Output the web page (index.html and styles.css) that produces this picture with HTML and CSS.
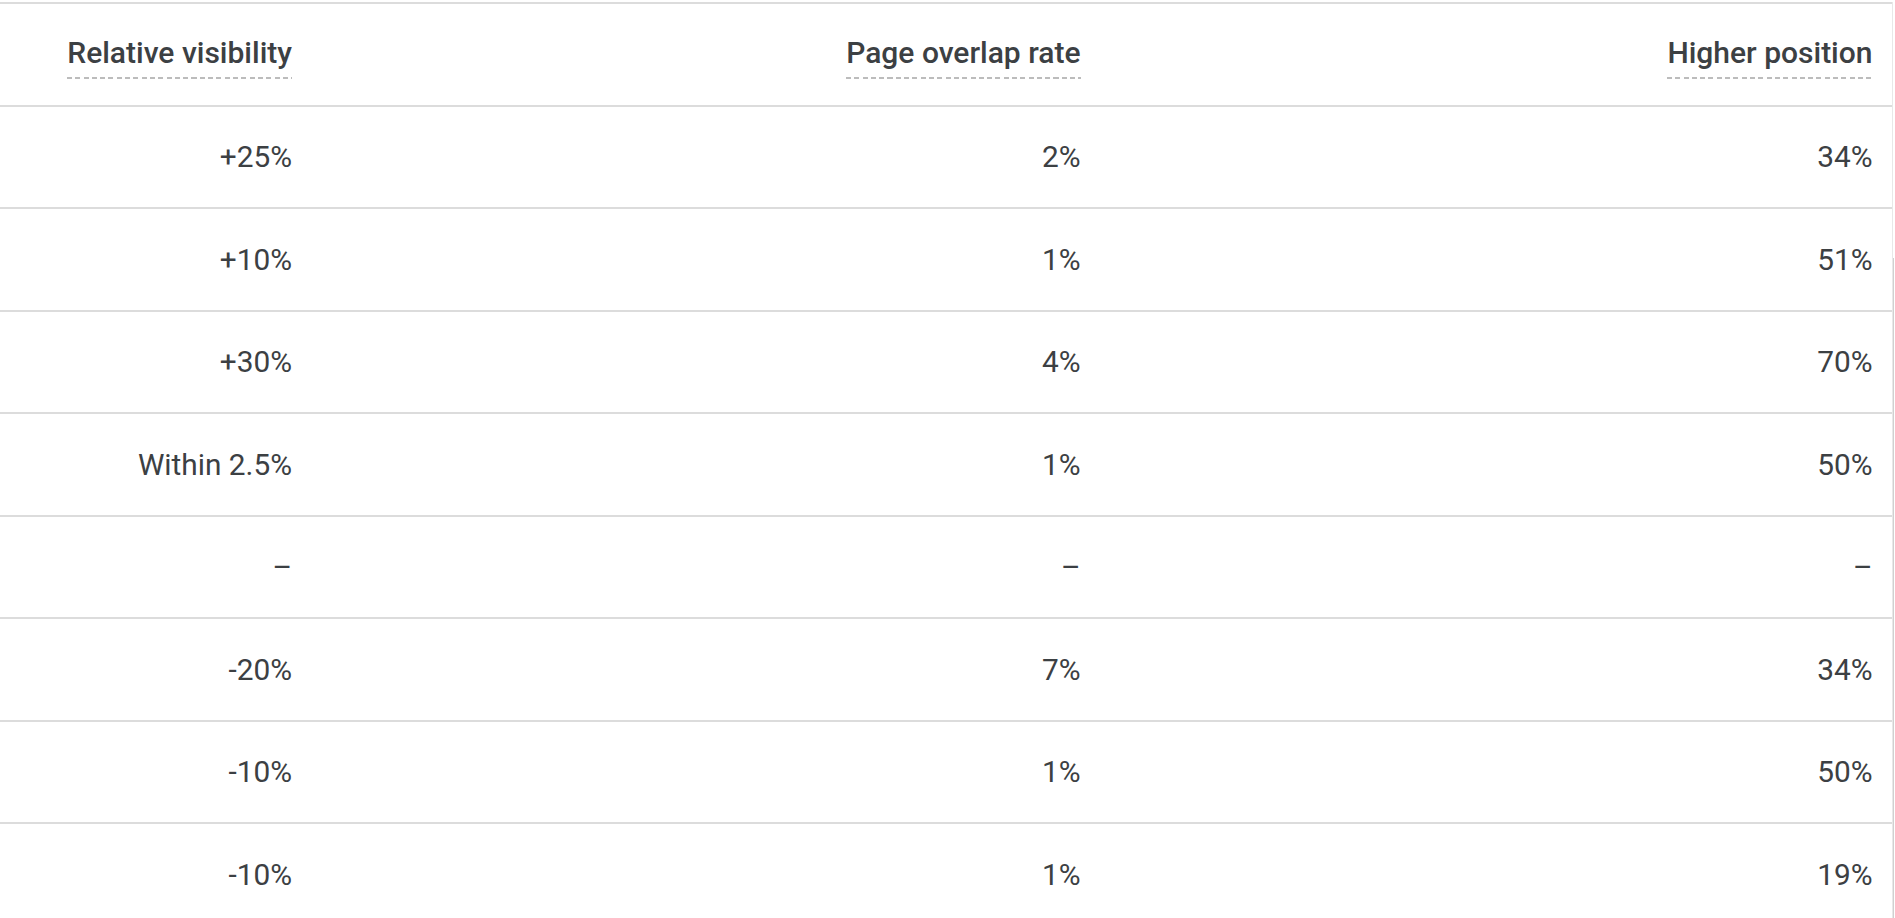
FILE: index.html
```html
<!DOCTYPE html>
<html lang="en">
<head>
<meta charset="utf-8">
<title>Comparison table</title>
<link rel="stylesheet" href="styles.css">
</head>
<body>
<div class="page">
  <div class="card">
    <div class="row head">
      <div class="cell"><span class="label">Relative visibility</span></div>
      <div class="cell"><span class="label">Page overlap rate</span></div>
      <div class="cell"><span class="label">Higher position</span></div>
    </div>
    <div class="row"><div class="cell">+25%</div><div class="cell">2%</div><div class="cell">34%</div></div>
    <div class="row"><div class="cell">+10%</div><div class="cell">1%</div><div class="cell">51%</div></div>
    <div class="row"><div class="cell">+30%</div><div class="cell">4%</div><div class="cell">70%</div></div>
    <div class="row"><div class="cell">Within 2.5%</div><div class="cell">1%</div><div class="cell">50%</div></div>
    <div class="row"><div class="cell">–</div><div class="cell">–</div><div class="cell">–</div></div>
    <div class="row"><div class="cell">-20%</div><div class="cell">7%</div><div class="cell">34%</div></div>
    <div class="row"><div class="cell">-10%</div><div class="cell">1%</div><div class="cell">50%</div></div>
    <div class="row last"><div class="cell">-10%</div><div class="cell">1%</div><div class="cell">19%</div></div>
  </div>
  <div class="edge"><div class="thumb"></div></div>
</div>
</body>
</html>
```
FILE: styles.css
```css
html, body {
  margin: 0;
  padding: 0;
  background: #ffffff;
}
body {
  font-family: Roboto, "Liberation Sans", Arial, sans-serif;
  color: #3c4043;
  overflow: hidden;
}
.page {
  display: flex;
  height: 918px;
  padding-top: 2px;
  box-sizing: border-box;
}
.card {
  flex: 1;
  border-top: 2px solid #dcdcdc;
  height: max-content;
}
.row {
  display: grid;
  grid-template-columns: 292px 788.5px 792px 1fr;
  height: 100.5px;
  border-bottom: 2px solid #dcdcdc;
  font-size: 29.8px;
}
.row.last {
  border-bottom: none;
}
.cell {
  display: flex;
  align-items: center;
  justify-content: flex-end;
  white-space: nowrap;
}
.row.head {
  height: 100.7px;
  font-size: 30px;
  font-weight: 500;
}
.row.head .cell {
  align-items: flex-start;
  padding-top: 32px;
}
.label {
  display: inline-block;
  line-height: 34px;
  padding-bottom: 9px;
  background-image: repeating-linear-gradient(to right, #bcbcbc 0 5px, transparent 5px 8.3px);
  background-size: 100% 2px;
  background-position: left bottom;
  background-repeat: no-repeat;
}
.edge {
  width: 3px;
  border-left: 1px solid #e8e8e8;
  box-sizing: border-box;
}
.thumb {
  margin-top: 256px;
  width: 1px;
  height: 662px;
  background: #d0d0d0;
}
```
